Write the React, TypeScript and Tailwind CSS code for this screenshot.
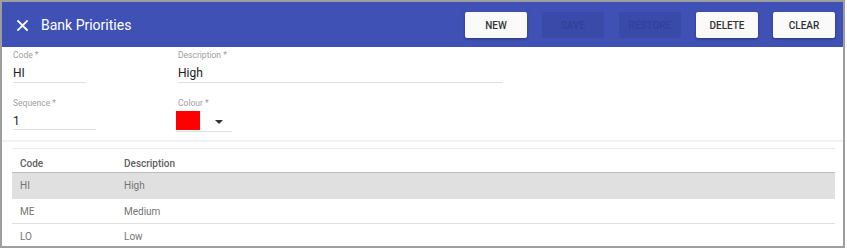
import React from 'react';

const ROWS = [
  { code: 'HI', description: 'High', h: 'h-[26px]' },
  { code: 'ME', description: 'Medium', h: 'h-[25px]' },
  { code: 'LO', description: 'Low', h: 'h-[25px]' },
];

const ACTIONS = [
  { label: 'NEW', enabled: true },
  { label: 'SAVE', enabled: false },
  { label: 'RESTORE', enabled: false },
  { label: 'DELETE', enabled: true },
  { label: 'CLEAR', enabled: true },
];

const Field: React.FC<{ label: string; value: string; className: string }> = ({ label, value, className }) => (
  <div className={`flex flex-col ${className}`}>
    <span className="text-[8.5px] leading-[10px] text-[#9e9e9e]">{label} *</span>
    <div className="mt-[5px] h-[18px] leading-[16px] text-[12px] text-[#212121] border-b border-[#e0e0e0]">{value}</div>
  </div>
);

const App: React.FC = () => {
  return (
    <div className="w-[847px] h-[250px] bg-white" style={{ fontFamily: 'Roboto, "Liberation Sans", sans-serif' }}>
      <div className="w-[845px] h-[248px] border-2 border-[#9e9e9e] flex flex-col overflow-hidden">
        {/* Toolbar */}
        <div className="h-[45px] shrink-0 bg-[#3f51b5] flex items-center pl-[15px] pr-[8px]">
          <svg width="11" height="11" viewBox="0 0 11 11" className="shrink-0 mt-[1px]">
            <path d="M1 1 L10 10 M10 1 L1 10" stroke="white" strokeWidth="1.8" strokeLinecap="square" />
          </svg>
          <span className="ml-[13px] text-[14px] text-white mt-[1px]">Bank Priorities</span>
          <div className="ml-auto flex gap-[15px] mt-[1px]">
            {ACTIONS.map((a) => (
              <button
                key={a.label}
                className={`w-[62px] h-[26px] rounded-[2px] text-[10px] font-medium ${
                  a.enabled
                    ? 'bg-[#fafafa] text-[#333] shadow-[0_1px_3px_rgba(0,0,0,0.35)]'
                    : 'bg-[#3a4aa8] text-[#31409a]'
                }`}
              >
                {a.label}
              </button>
            ))}
          </div>
        </div>

        {/* Form */}
        <div className="pl-[11px] pt-[3px] shrink-0">
          <div className="flex">
            <Field label="Code" value="HI" className="w-[73px]" />
            <Field label="Description" value="High" className="ml-[92px] w-[325px]" />
          </div>
          <div className="flex mt-[15px]">
            <div className="flex flex-col w-[83px]">
              <span className="text-[8.5px] leading-[10px] text-[#9e9e9e]">Sequence *</span>
              <div className="mt-[5px] h-[17px] leading-[16px] text-[12px] text-[#212121] border-b border-[#e0e0e0]">1</div>
            </div>
            <div className="ml-[80px] flex flex-col">
              <span className="ml-[2px] text-[8.5px] leading-[10px] text-[#9e9e9e]">Colour *</span>
              <div className="mt-[3px] w-[56px] h-[21px] flex items-start border-b border-[#e0e0e0]">
                <div className="w-[24px] h-[19px] bg-[#ff0000]" />
                <svg width="8" height="4" viewBox="0 0 8 4" className="ml-[15px] mt-[9px]">
                  <path d="M0 0 L8 0 L4 4 Z" fill="#333" />
                </svg>
              </div>
            </div>
          </div>
        </div>

        <div className="mt-[8px] h-[2px] bg-[#f2f2f2] shrink-0" />

        {/* Table */}
        <div className="ml-[10px] mr-[8px] mt-[6px] shrink-0 border-t border-[#ececec] text-[10px]">
          <div className="grid grid-cols-[104px_1fr] h-[24px] items-end pb-[1px] border-b border-[#bdbdbd] font-medium text-[#616161]">
            <span className="px-2">Code</span>
            <span className="px-2">Description</span>
          </div>
          {ROWS.map((r, i) => (
            <div
              key={r.code}
              className={`grid grid-cols-[104px_1fr] ${r.h} items-center border-b border-[#e0e0e0] text-[#757575] ${
                i === 0 ? 'bg-[#e0e0e0]' : ''
              }`}
            >
              <span className="px-2">{r.code}</span>
              <span className="px-2">{r.description}</span>
            </div>
          ))}
        </div>
      </div>
    </div>
  );
};

export default App;
